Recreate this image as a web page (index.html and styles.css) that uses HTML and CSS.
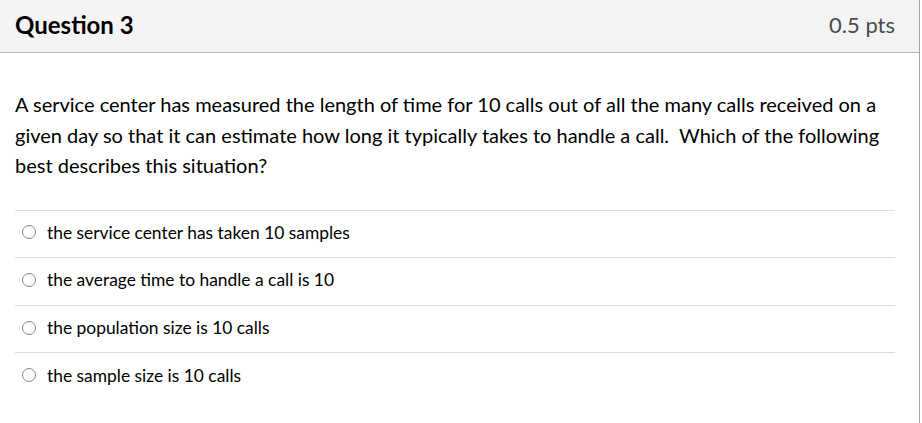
FILE: index.html
```html
<!DOCTYPE html>
<html lang="en">
<head>
<meta charset="utf-8">
<title>Question 3</title>
<link rel="stylesheet" href="styles.css">
</head>
<body>
<div class="card">
  <div class="card-header">
    <h2 class="q-title">Question 3</h2>
    <span class="q-points">0.5 pts</span>
  </div>
  <div class="card-body">
    <p class="q-text">A service center has measured the length of time for 10 calls out of all the many calls received on a given day so that it can estimate how long it typically takes to handle a call.&nbsp; Which of the following best describes this situation?</p>
    <div class="answers">
      <label class="answer"><span class="radio"></span><span class="answer-text">the service center has taken 10 samples</span></label>
      <label class="answer"><span class="radio"></span><span class="answer-text">the average time to handle a call is 10</span></label>
      <label class="answer"><span class="radio"></span><span class="answer-text">the population size is 10 calls</span></label>
      <label class="answer"><span class="radio"></span><span class="answer-text">the sample size is 10 calls</span></label>
    </div>
  </div>
</div>
</body>
</html>
```

FILE: styles.css
```css
html, body {
  margin: 0;
  padding: 0;
  background: #ffffff;
}
body {
  font-family: Lato, "Open Sans", "Liberation Sans", sans-serif;
  color: #2d3b45;
}
.card {
  width: 920px;
  height: 423px;
  border-right: 1px solid #a5a5a5;
  box-sizing: border-box;
  display: flex;
  flex-direction: column;
}
.card-header {
  height: 53px;
  box-sizing: border-box;
  background: #f4f4f4;
  border-bottom: 1px solid #b4b4b4;
  display: flex;
  align-items: center;
  justify-content: space-between;
  padding: 0 24px 4px 15px;
}
.q-title {
  margin: 0;
  font-size: 24px;
  font-weight: 700;
  color: #000000;
}
.q-points {
  font-size: 22px;
  color: #4a4a4a;
}
.card-body {
  padding: 36px 24px 0 15px;
}
.q-text {
  margin: 0;
  font-size: 20px;
  line-height: 30.5px;
  color: #000000;
}
.answers {
  margin-top: 29px;
  display: flex;
  flex-direction: column;
}
.answer {
  display: flex;
  align-items: center;
  height: 47.67px;
  box-sizing: border-box;
  border-top: 1px solid #dcdcdc;
  padding: 0 0 3px 6.5px;
}
.radio {
  width: 12px;
  height: 12px;
  border: 1px solid #858585;
  border-radius: 50%;
  flex: none;
}
.answer-text {
  margin-left: 11.5px;
  font-size: 17.4px;
  color: #000000;
}
```
